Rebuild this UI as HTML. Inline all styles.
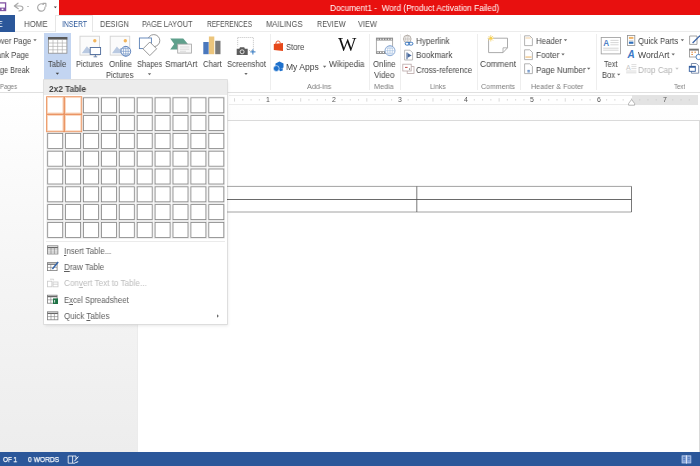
<!DOCTYPE html>
<html><head><meta charset="utf-8"><title>Document1 - Word</title>
<style>
html,body{margin:0;padding:0}
body{width:700px;height:466px;overflow:hidden;position:relative;background:#fff;font-family:"Liberation Sans",sans-serif}
.a{position:absolute}
.t{position:absolute;white-space:pre;will-change:transform;transform-origin:0 50%;font-family:"Liberation Sans",sans-serif}
.t u{text-decoration-thickness:0.5px;text-underline-offset:0.6px}
#title{left:59.2px;top:0;width:641px;height:14.8px;background:#e8100f}
#file{left:0;top:15px;width:15px;height:16.7px;background:#2b579a}
#tabline{left:15px;top:31px;width:685px;height:1px;background:#ececec}
#instab{left:54.8px;top:15px;width:36px;height:17px;background:#fff;border:1px solid #e6e6e6;border-bottom:none;box-sizing:content-box}
#ribbon{left:0;top:32px;width:700px;height:60px;background:#fff}
#ribline{left:0;top:92px;width:700px;height:1px;background:#e0e0e0}
#work{left:0;top:93px;width:700px;height:358.6px;background:linear-gradient(#ffffff,#f5f5f5 50%,#ededed)}
#page{left:137px;top:120.3px;width:560.5px;height:340px;background:#fff;border:1px solid #dadada;border-left-color:#ececec;border-bottom:none}
#rulerw{left:229px;top:94.6px;width:403px;height:10.2px;background:#fff;border-top:1px solid #ececec;border-bottom:1px solid #ececec;box-sizing:border-box}
#rulerg{left:631.6px;top:94.6px;width:66.6px;height:10.2px;background:#e3e3e3}
#status{left:0;top:451.6px;width:700px;height:14.4px;background:#2b579a}
#tblbtn{left:44.2px;top:32.8px;width:26.5px;height:46.6px;background:#c3d5f1}
#dd{left:44.2px;top:79.7px;width:182.6px;height:244.3px;background:#fff;box-shadow:0 0 0 0.8px #d9d9d9,1px 2px 3px rgba(0,0,0,.09)}
#ddh{left:44.2px;top:79.7px;width:182.6px;height:15.7px;background:#ececec}
#ddsep{left:46px;top:241px;width:179px;height:1px;background:#ebebeb}
.sep{position:absolute;top:34px;width:1px;height:55.5px;background:#eeeeee}
svg{position:absolute;left:0;top:0}
</style></head>
<body>
<div class="a" id="title"></div>
<div class="a" id="tabline"></div>
<div class="a" id="file"></div>
<div class="a" id="instab"></div>
<div class="a" id="ribbon"></div>
<div class="a" id="ribline"></div>
<div class="a" id="work"></div>
<div class="a" id="page"></div>
<div class="a" id="rulerw"></div>
<div class="a" id="rulerg"></div>
<div class="a" id="status"></div>
<div class="a" id="tblbtn"></div>
<div class="sep" style="left:269.5px"></div>
<div class="sep" style="left:368.5px"></div>
<div class="sep" style="left:399.5px"></div>
<div class="sep" style="left:476.5px"></div>
<div class="sep" style="left:519.5px"></div>
<div class="sep" style="left:595.8px"></div>
<div class="a" id="dd"></div>
<div class="a" id="ddh"></div>
<div class="a" id="ddsep"></div>
<svg width="700" height="466" viewBox="0 0 700 466">
<!-- ruler ticks -->
<g stroke="#c8c8c8" stroke-width="0.7"><line x1="234.52" y1="98.2" x2="234.52" y2="101.6" /><line x1="242.79" y1="99" x2="242.79" y2="100.6" /><line x1="251.06" y1="99" x2="251.06" y2="100.6" /><line x1="259.33" y1="99" x2="259.33" y2="100.6" /><line x1="275.87" y1="99" x2="275.87" y2="100.6" /><line x1="284.14" y1="99" x2="284.14" y2="100.6" /><line x1="292.41" y1="99" x2="292.41" y2="100.6" /><line x1="300.68" y1="98.2" x2="300.68" y2="101.6" /><line x1="308.94" y1="99" x2="308.94" y2="100.6" /><line x1="317.21" y1="99" x2="317.21" y2="100.6" /><line x1="325.48" y1="99" x2="325.48" y2="100.6" /><line x1="342.02" y1="99" x2="342.02" y2="100.6" /><line x1="350.29" y1="99" x2="350.29" y2="100.6" /><line x1="358.56" y1="99" x2="358.56" y2="100.6" /><line x1="366.82" y1="98.2" x2="366.82" y2="101.6" /><line x1="375.09" y1="99" x2="375.09" y2="100.6" /><line x1="383.36" y1="99" x2="383.36" y2="100.6" /><line x1="391.63" y1="99" x2="391.63" y2="100.6" /><line x1="408.17" y1="99" x2="408.17" y2="100.6" /><line x1="416.44" y1="99" x2="416.44" y2="100.6" /><line x1="424.71" y1="99" x2="424.71" y2="100.6" /><line x1="432.98" y1="98.2" x2="432.98" y2="101.6" /><line x1="441.24" y1="99" x2="441.24" y2="100.6" /><line x1="449.51" y1="99" x2="449.51" y2="100.6" /><line x1="457.78" y1="99" x2="457.78" y2="100.6" /><line x1="474.32" y1="99" x2="474.32" y2="100.6" /><line x1="482.59" y1="99" x2="482.59" y2="100.6" /><line x1="490.86" y1="99" x2="490.86" y2="100.6" /><line x1="499.12" y1="98.2" x2="499.12" y2="101.6" /><line x1="507.39" y1="99" x2="507.39" y2="100.6" /><line x1="515.66" y1="99" x2="515.66" y2="100.6" /><line x1="523.93" y1="99" x2="523.93" y2="100.6" /><line x1="540.47" y1="99" x2="540.47" y2="100.6" /><line x1="548.74" y1="99" x2="548.74" y2="100.6" /><line x1="557.01" y1="99" x2="557.01" y2="100.6" /><line x1="565.28" y1="98.2" x2="565.28" y2="101.6" /><line x1="573.54" y1="99" x2="573.54" y2="100.6" /><line x1="581.81" y1="99" x2="581.81" y2="100.6" /><line x1="590.08" y1="99" x2="590.08" y2="100.6" /><line x1="606.62" y1="99" x2="606.62" y2="100.6" /><line x1="614.89" y1="99" x2="614.89" y2="100.6" /><line x1="623.16" y1="99" x2="623.16" y2="100.6" /><line x1="631.42" y1="98.2" x2="631.42" y2="101.6" /><line x1="639.69" y1="99" x2="639.69" y2="100.6" /><line x1="647.96" y1="99" x2="647.96" y2="100.6" /><line x1="656.23" y1="99" x2="656.23" y2="100.6" /><line x1="672.77" y1="99" x2="672.77" y2="100.6" /><line x1="681.04" y1="99" x2="681.04" y2="100.6" /><line x1="689.31" y1="99" x2="689.31" y2="100.6" /></g>
<!-- right indent marker -->
<path d="M631.6 99.5 L634.6 103.5 L634.6 105.2 L628.6 105.2 L628.6 103.5 Z" fill="#fff" stroke="#999" stroke-width="0.7"/>
<!-- document table -->
<g stroke="#555" stroke-width="0.8" fill="none">
<path d="M227 186.4H631.5M227 212H631.5" stroke="#8a8a8a"/>
<path d="M227 199.5H631.5" stroke="#444"/>
<path d="M416.8 186.4V212M631.5 186.4V212" stroke="#555"/>
</g>
<!-- grid -->
<g fill="#fff" stroke="#838383" stroke-width="0.8"><g stroke="#e2e2e2" stroke-width="0.7"><rect x="82.70" y="97.00" width="16.60" height="16.60"/><rect x="100.60" y="97.00" width="16.60" height="16.60"/><rect x="118.50" y="97.00" width="16.60" height="16.60"/><rect x="136.40" y="97.00" width="16.60" height="16.60"/><rect x="154.30" y="97.00" width="16.60" height="16.60"/><rect x="172.20" y="97.00" width="16.60" height="16.60"/><rect x="190.10" y="97.00" width="16.60" height="16.60"/><rect x="208.00" y="97.00" width="16.60" height="16.60"/><rect x="82.70" y="114.80" width="16.60" height="16.60"/><rect x="100.60" y="114.80" width="16.60" height="16.60"/><rect x="118.50" y="114.80" width="16.60" height="16.60"/><rect x="136.40" y="114.80" width="16.60" height="16.60"/><rect x="154.30" y="114.80" width="16.60" height="16.60"/><rect x="172.20" y="114.80" width="16.60" height="16.60"/><rect x="190.10" y="114.80" width="16.60" height="16.60"/><rect x="208.00" y="114.80" width="16.60" height="16.60"/><rect x="46.90" y="132.60" width="16.60" height="16.60"/><rect x="64.80" y="132.60" width="16.60" height="16.60"/><rect x="82.70" y="132.60" width="16.60" height="16.60"/><rect x="100.60" y="132.60" width="16.60" height="16.60"/><rect x="118.50" y="132.60" width="16.60" height="16.60"/><rect x="136.40" y="132.60" width="16.60" height="16.60"/><rect x="154.30" y="132.60" width="16.60" height="16.60"/><rect x="172.20" y="132.60" width="16.60" height="16.60"/><rect x="190.10" y="132.60" width="16.60" height="16.60"/><rect x="208.00" y="132.60" width="16.60" height="16.60"/><rect x="46.90" y="150.40" width="16.60" height="16.60"/><rect x="64.80" y="150.40" width="16.60" height="16.60"/><rect x="82.70" y="150.40" width="16.60" height="16.60"/><rect x="100.60" y="150.40" width="16.60" height="16.60"/><rect x="118.50" y="150.40" width="16.60" height="16.60"/><rect x="136.40" y="150.40" width="16.60" height="16.60"/><rect x="154.30" y="150.40" width="16.60" height="16.60"/><rect x="172.20" y="150.40" width="16.60" height="16.60"/><rect x="190.10" y="150.40" width="16.60" height="16.60"/><rect x="208.00" y="150.40" width="16.60" height="16.60"/><rect x="46.90" y="168.20" width="16.60" height="16.60"/><rect x="64.80" y="168.20" width="16.60" height="16.60"/><rect x="82.70" y="168.20" width="16.60" height="16.60"/><rect x="100.60" y="168.20" width="16.60" height="16.60"/><rect x="118.50" y="168.20" width="16.60" height="16.60"/><rect x="136.40" y="168.20" width="16.60" height="16.60"/><rect x="154.30" y="168.20" width="16.60" height="16.60"/><rect x="172.20" y="168.20" width="16.60" height="16.60"/><rect x="190.10" y="168.20" width="16.60" height="16.60"/><rect x="208.00" y="168.20" width="16.60" height="16.60"/><rect x="46.90" y="186.00" width="16.60" height="16.60"/><rect x="64.80" y="186.00" width="16.60" height="16.60"/><rect x="82.70" y="186.00" width="16.60" height="16.60"/><rect x="100.60" y="186.00" width="16.60" height="16.60"/><rect x="118.50" y="186.00" width="16.60" height="16.60"/><rect x="136.40" y="186.00" width="16.60" height="16.60"/><rect x="154.30" y="186.00" width="16.60" height="16.60"/><rect x="172.20" y="186.00" width="16.60" height="16.60"/><rect x="190.10" y="186.00" width="16.60" height="16.60"/><rect x="208.00" y="186.00" width="16.60" height="16.60"/><rect x="46.90" y="203.80" width="16.60" height="16.60"/><rect x="64.80" y="203.80" width="16.60" height="16.60"/><rect x="82.70" y="203.80" width="16.60" height="16.60"/><rect x="100.60" y="203.80" width="16.60" height="16.60"/><rect x="118.50" y="203.80" width="16.60" height="16.60"/><rect x="136.40" y="203.80" width="16.60" height="16.60"/><rect x="154.30" y="203.80" width="16.60" height="16.60"/><rect x="172.20" y="203.80" width="16.60" height="16.60"/><rect x="190.10" y="203.80" width="16.60" height="16.60"/><rect x="208.00" y="203.80" width="16.60" height="16.60"/><rect x="46.90" y="221.60" width="16.60" height="16.60"/><rect x="64.80" y="221.60" width="16.60" height="16.60"/><rect x="82.70" y="221.60" width="16.60" height="16.60"/><rect x="100.60" y="221.60" width="16.60" height="16.60"/><rect x="118.50" y="221.60" width="16.60" height="16.60"/><rect x="136.40" y="221.60" width="16.60" height="16.60"/><rect x="154.30" y="221.60" width="16.60" height="16.60"/><rect x="172.20" y="221.60" width="16.60" height="16.60"/><rect x="190.10" y="221.60" width="16.60" height="16.60"/><rect x="208.00" y="221.60" width="16.60" height="16.60"/></g><rect x="83.50" y="97.80" width="15.00" height="15.00"/><rect x="101.40" y="97.80" width="15.00" height="15.00"/><rect x="119.30" y="97.80" width="15.00" height="15.00"/><rect x="137.20" y="97.80" width="15.00" height="15.00"/><rect x="155.10" y="97.80" width="15.00" height="15.00"/><rect x="173.00" y="97.80" width="15.00" height="15.00"/><rect x="190.90" y="97.80" width="15.00" height="15.00"/><rect x="208.80" y="97.80" width="15.00" height="15.00"/><rect x="83.50" y="115.60" width="15.00" height="15.00"/><rect x="101.40" y="115.60" width="15.00" height="15.00"/><rect x="119.30" y="115.60" width="15.00" height="15.00"/><rect x="137.20" y="115.60" width="15.00" height="15.00"/><rect x="155.10" y="115.60" width="15.00" height="15.00"/><rect x="173.00" y="115.60" width="15.00" height="15.00"/><rect x="190.90" y="115.60" width="15.00" height="15.00"/><rect x="208.80" y="115.60" width="15.00" height="15.00"/><rect x="47.70" y="133.40" width="15.00" height="15.00"/><rect x="65.60" y="133.40" width="15.00" height="15.00"/><rect x="83.50" y="133.40" width="15.00" height="15.00"/><rect x="101.40" y="133.40" width="15.00" height="15.00"/><rect x="119.30" y="133.40" width="15.00" height="15.00"/><rect x="137.20" y="133.40" width="15.00" height="15.00"/><rect x="155.10" y="133.40" width="15.00" height="15.00"/><rect x="173.00" y="133.40" width="15.00" height="15.00"/><rect x="190.90" y="133.40" width="15.00" height="15.00"/><rect x="208.80" y="133.40" width="15.00" height="15.00"/><rect x="47.70" y="151.20" width="15.00" height="15.00"/><rect x="65.60" y="151.20" width="15.00" height="15.00"/><rect x="83.50" y="151.20" width="15.00" height="15.00"/><rect x="101.40" y="151.20" width="15.00" height="15.00"/><rect x="119.30" y="151.20" width="15.00" height="15.00"/><rect x="137.20" y="151.20" width="15.00" height="15.00"/><rect x="155.10" y="151.20" width="15.00" height="15.00"/><rect x="173.00" y="151.20" width="15.00" height="15.00"/><rect x="190.90" y="151.20" width="15.00" height="15.00"/><rect x="208.80" y="151.20" width="15.00" height="15.00"/><rect x="47.70" y="169.00" width="15.00" height="15.00"/><rect x="65.60" y="169.00" width="15.00" height="15.00"/><rect x="83.50" y="169.00" width="15.00" height="15.00"/><rect x="101.40" y="169.00" width="15.00" height="15.00"/><rect x="119.30" y="169.00" width="15.00" height="15.00"/><rect x="137.20" y="169.00" width="15.00" height="15.00"/><rect x="155.10" y="169.00" width="15.00" height="15.00"/><rect x="173.00" y="169.00" width="15.00" height="15.00"/><rect x="190.90" y="169.00" width="15.00" height="15.00"/><rect x="208.80" y="169.00" width="15.00" height="15.00"/><rect x="47.70" y="186.80" width="15.00" height="15.00"/><rect x="65.60" y="186.80" width="15.00" height="15.00"/><rect x="83.50" y="186.80" width="15.00" height="15.00"/><rect x="101.40" y="186.80" width="15.00" height="15.00"/><rect x="119.30" y="186.80" width="15.00" height="15.00"/><rect x="137.20" y="186.80" width="15.00" height="15.00"/><rect x="155.10" y="186.80" width="15.00" height="15.00"/><rect x="173.00" y="186.80" width="15.00" height="15.00"/><rect x="190.90" y="186.80" width="15.00" height="15.00"/><rect x="208.80" y="186.80" width="15.00" height="15.00"/><rect x="47.70" y="204.60" width="15.00" height="15.00"/><rect x="65.60" y="204.60" width="15.00" height="15.00"/><rect x="83.50" y="204.60" width="15.00" height="15.00"/><rect x="101.40" y="204.60" width="15.00" height="15.00"/><rect x="119.30" y="204.60" width="15.00" height="15.00"/><rect x="137.20" y="204.60" width="15.00" height="15.00"/><rect x="155.10" y="204.60" width="15.00" height="15.00"/><rect x="173.00" y="204.60" width="15.00" height="15.00"/><rect x="190.90" y="204.60" width="15.00" height="15.00"/><rect x="208.80" y="204.60" width="15.00" height="15.00"/><rect x="47.70" y="222.40" width="15.00" height="15.00"/><rect x="65.60" y="222.40" width="15.00" height="15.00"/><rect x="83.50" y="222.40" width="15.00" height="15.00"/><rect x="101.40" y="222.40" width="15.00" height="15.00"/><rect x="119.30" y="222.40" width="15.00" height="15.00"/><rect x="137.20" y="222.40" width="15.00" height="15.00"/><rect x="155.10" y="222.40" width="15.00" height="15.00"/><rect x="173.00" y="222.40" width="15.00" height="15.00"/><rect x="190.90" y="222.40" width="15.00" height="15.00"/><rect x="208.80" y="222.40" width="15.00" height="15.00"/></g>
<g fill="#fff" stroke="#ea8f5a" stroke-width="1"><rect x="46.65" y="96.75" width="17.10" height="17.10"/><rect x="64.55" y="96.75" width="17.10" height="17.10"/><rect x="46.65" y="114.55" width="17.10" height="17.10"/><rect x="64.55" y="114.55" width="17.10" height="17.10"/><g stroke="#f9d3b9" stroke-width="0.9"><rect x="47.50" y="97.60" width="15.40" height="15.40"/><rect x="65.40" y="97.60" width="15.40" height="15.40"/><rect x="47.50" y="115.40" width="15.40" height="15.40"/><rect x="65.40" y="115.40" width="15.40" height="15.40"/></g></g>
<!-- QAT -->
<g>
<rect x="-4" y="2.9" width="9.6" height="7.6" fill="#fff" stroke="#8153a3" stroke-width="1.3"/>
<rect x="-4" y="7.6" width="9.6" height="2.9" fill="#8153a3"/>
<rect x="1.6" y="8.6" width="1.8" height="1.5" fill="#fff"/>
<g fill="none" stroke="#a9a9a9" stroke-width="1.15" stroke-linecap="round" stroke-linejoin="round">
<path d="M18 3.2L14.3 6L18.3 8.7M14.8 6H20Q23.2 6.3 22.9 8.6Q22.4 10.9 19 10.9"/>
<path d="M43.4 4.4A3.7 3.7 0 1 0 45 7.1"/>
<path d="M42.9 3.4H45.9V6.3"/>
</g>
<path d="M27 6.5H29" stroke="#c4c4c4" stroke-width="1"/>
<path d="M53.8 6.6H56.9L55.35 8.3Z" fill="#444"/>
</g>
<!-- small dropdown arrows -->
<g fill="#6a6a6a">
<path d="M33.30 39.35h3.4l-1.7 1.95z"/>
<path d="M55.70 72.75h3.4l-1.7 1.95z" fill="#444"/>
<path d="M147.80 73.25h3.4l-1.7 1.95z"/>
<path d="M244.30 73.05h3.4l-1.7 1.95z"/>
<path d="M322.90 65.75h3.4l-1.7 1.95z"/>
<path d="M563.80 39.25h3.4l-1.7 1.95z"/>
<path d="M561.30 53.55h3.4l-1.7 1.95z"/>
<path d="M587.00 67.75h3.4l-1.7 1.95z"/>
<path d="M617.00 73.65h3.4l-1.7 1.95z"/>
<path d="M680.70 39.35h3.4l-1.7 1.95z"/>
<path d="M671.50 53.55h3.4l-1.7 1.95z"/>
<path d="M675.30 67.75h3.4l-1.7 1.95z" fill="#c4c4c4"/>
<path d="M217 314.3v3.4l1.9-1.7z"/>
</g>
<!-- Table icon -->
<g>
<rect x="48.4" y="37.4" width="18.5" height="15.8" fill="#fff" stroke="#8a8a8a" stroke-width="0.8"/>
<rect x="48" y="37" width="19.3" height="2.6" fill="#595959"/>
<path d="M53 39.6V53.2M57.65 39.6V53.2M62.3 39.6V53.2M48.4 43H66.9M48.4 46.4H66.9M48.4 49.8H66.9" stroke="#a6a6a6" stroke-width="0.6" fill="none"/>
</g>
<!-- Pictures -->
<g>
<rect x="80" y="36.2" width="19.5" height="18.9" fill="#fbfbfb" stroke="#d2d2d2" stroke-width="0.9"/>
<circle cx="94.8" cy="40.7" r="1.7" fill="#f2b45a"/>
<path d="M81.8 53.3L86.9 46.2L89.5 49.2L91.5 47.5L96 53.3Z" fill="#b9c9e1"/>
<rect x="90.2" y="47.5" width="10.4" height="7" fill="#fff" stroke="#4a6899" stroke-width="0.9"/>
<path d="M95.4 54.5V56.6M93.6 56.8H97.2" stroke="#4a6899" stroke-width="0.8"/>
</g>
<!-- Online Pictures -->
<g>
<rect x="110.2" y="36.2" width="19.5" height="18.9" fill="#fbfbfb" stroke="#d2d2d2" stroke-width="0.9"/>
<circle cx="125.3" cy="40.7" r="1.7" fill="#f2b45a"/>
<path d="M112 53.3L116.9 46.4L119.3 49.2L121 47.8L125 53.3Z" fill="#b9c9e1"/>
<circle cx="125.8" cy="51.3" r="4.9" fill="#fff" stroke="#4a74b4" stroke-width="0.85"/>
<path d="M121 51.3H130.6M122 48.7H129.6M122 53.9H129.6M125.8 46.4V56.2" stroke="#5a82bd" stroke-width="0.55" fill="none"/>
<ellipse cx="125.8" cy="51.3" rx="2.4" ry="4.9" fill="none" stroke="#5a82bd" stroke-width="0.55"/>
</g>
<!-- Shapes -->
<g fill="#fff" stroke-width="0.9">
<circle cx="153.8" cy="40.6" r="6" stroke="#8c8c8c"/>
<rect x="139.4" y="38" width="12" height="10.6" stroke="#5b80b6"/>
<path d="M149.8 42L156.6 48.8L149.8 55.6L143 48.8Z" stroke="#8c8c8c"/>
</g>
<!-- SmartArt -->
<g>
<path d="M170.2 38.4H183.2L187.9 44L183.2 49.6H170.2L174.2 44Z" fill="#5fa08c"/>
<rect x="177.7" y="44.1" width="13.8" height="9" fill="#f6f6f6" stroke="#a3a3a3" stroke-width="0.8"/>
<path d="M180 47H189.3M180 49.2H189.3M180 51.3H186" stroke="#d0d0d0" stroke-width="0.7"/>
</g>
<!-- Chart -->
<g>
<rect x="203.3" y="42" width="5.4" height="12.2" fill="#4a78bd"/>
<rect x="208.9" y="36.5" width="5.4" height="17.7" fill="#ecc57c"/>
<rect x="215.2" y="40.8" width="5.3" height="13.4" fill="#7a7a7a"/>
</g>
<!-- Screenshot -->
<g>
<rect x="237.7" y="37.5" width="15.7" height="13" fill="none" stroke="#a8a8a8" stroke-width="0.7" stroke-dasharray="1 1"/>
<rect x="235.8" y="46.5" width="13" height="9" fill="#fff"/>
<path d="M236.7 48.7H239.3L240 47.3H244.2L244.9 48.7H247.7V55H236.7Z" fill="#5c5c5c"/>
<circle cx="242.1" cy="51.8" r="2" fill="#5c5c5c" stroke="#fff" stroke-width="0.8"/>
<path d="M250.3 51.9H255.5M252.9 49.3V54.5" stroke="#2f77c0" stroke-width="1"/>
</g>
<!-- Store -->
<g>
<path d="M273.8 44.1L283 43V50.9L273.8 49.9Z" fill="#e6481a"/>
<path d="M275.8 44Q275.8 40.9 278 40.9Q280.2 40.9 280.4 43.4" fill="none" stroke="#e6481a" stroke-width="0.9"/>
</g>
<!-- My Apps -->
<g fill="#1d70cc">
<path d="M279.5 61.6L283.5 63.5V67.6L279.5 69.5L275.5 67.6V63.5Z"/>
<circle cx="276.3" cy="68.5" r="2.9" stroke="#fff" stroke-width="0.6"/>
<path d="M279 69.6L282.6 68L282.8 70.6L280 71.2Z"/>
</g>
<!-- Online video -->
<g>
<rect x="376.3" y="38" width="16.4" height="15.6" fill="#fff" stroke="#8a8a8a" stroke-width="0.7"/>
<rect x="376.3" y="38" width="16.4" height="2.5" fill="#868686"/>
<rect x="376.3" y="51.2" width="16.4" height="2.4" fill="#868686"/>
<path d="M377.4 39.25H392M377.4 52.4H392" stroke="#fff" stroke-width="1.1" stroke-dasharray="1.3 1.35"/>
<circle cx="390" cy="50.7" r="5" fill="#fff" stroke="#7096cc" stroke-width="0.8"/>
<path d="M385.2 50.7H394.8M386.3 48.2H393.7M386.3 53.2H393.7M390 45.8V55.6" stroke="#8fb0db" stroke-width="0.5" fill="none"/>
<ellipse cx="390" cy="50.7" rx="2.4" ry="5" fill="none" stroke="#8fb0db" stroke-width="0.5"/>
</g>
<!-- Hyperlink -->
<g fill="none">
<circle cx="407.3" cy="39" r="3.8" stroke="#a39a94" stroke-width="0.8" fill="#fff"/>
<path d="M403.6 39H411M407.3 35.3V42.7" stroke="#b0a8a2" stroke-width="0.55"/>
<ellipse cx="407.3" cy="39" rx="1.8" ry="3.8" stroke="#b0a8a2" stroke-width="0.55"/>
<rect x="405.2" y="42.3" width="4.1" height="2.8" rx="1.4" stroke="#2c6db9" stroke-width="0.95" fill="#fff"/>
<rect x="408.8" y="42.3" width="4.1" height="2.8" rx="1.4" stroke="#2c6db9" stroke-width="0.95"/>
</g>
<!-- Bookmark -->
<g>
<path d="M404.6 50.2H410L412.6 52.8V60H404.6Z" fill="#fff" stroke="#a8a8a8" stroke-width="0.8"/>
<path d="M407 52.4V59.2" stroke="#46679b" stroke-width="1.1"/>
<path d="M407.6 53L411.6 55.4L407.6 57.8Z" fill="#46679b"/>
</g>
<!-- Cross-reference -->
<g fill="#fff" stroke="#b9a7a7" stroke-width="0.8">
<rect x="407.2" y="66.6" width="6.8" height="6.8"/>
<rect x="402.8" y="64.2" width="8.4" height="6.8"/>
<path d="M405 67.4H407.6" stroke="#c0504d" stroke-width="1"/>
<path d="M409.6 68.2V70" stroke="#777" stroke-width="0.8"/>
</g>
<!-- Comment -->
<g>
<path d="M488.6 38.2H507.5V47.8L503 52.6H488.6Z" fill="#fff" stroke="#a2a2a2" stroke-width="0.9"/>
<path d="M507.5 47.8H503V52.6" fill="none" stroke="#a2a2a2" stroke-width="0.8"/>
<circle cx="490.8" cy="38.3" r="2.4" fill="#fff"/>
<path d="M492.00 38.30L494.00 38.30M491.65 39.15L493.06 40.56M490.80 39.50L490.80 41.50M489.95 39.15L488.54 40.56M489.60 38.30L487.60 38.30M489.95 37.45L488.54 36.04M490.80 37.10L490.80 35.10M491.65 37.45L493.06 36.04" stroke="#f2cf68" stroke-width="0.8"/>
<circle cx="490.8" cy="38.3" r="1.5" fill="#f6d04e"/>
</g>
<!-- Header / Footer / Page number -->
<g fill="#fff" stroke="#a0a0a0" stroke-width="0.8">
<path d="M524.6 35.8H529.8L532.4 38.4V45.6H524.6Z"/>
<path d="M524.6 49.8H529.8L532.4 52.4V59.6H524.6Z"/>
<path d="M524.6 63.8H529.8L532.4 66.4V73.6H524.6Z"/>
</g>
<rect x="525.4" y="37.2" width="5.4" height="1.6" fill="#f7e2c4"/>
<rect x="525.4" y="56.2" width="6.2" height="1.8" fill="#f4d4a6"/>
<path d="M527.4 70.5H529.8M527.4 71.8H529.8M528.1 69.8V72.6M529.2 69.8V72.6" stroke="#3b6fb5" stroke-width="0.5"/>
<!-- Text Box -->
<g>
<rect x="601.2" y="37.5" width="19.3" height="16.4" fill="#fff" stroke="#9a9a9a" stroke-width="0.8"/>
<path d="M610.4 40.4H618.6M610.4 42.6H618.6M610.4 44.8H618.6M603.2 48.2H618.6M603.2 50.2H618.6" stroke="#c4c4c4" stroke-width="0.7"/>
<text x="603.3" y="45.7" font-family="Liberation Sans, sans-serif" font-size="8.2" font-weight="700" fill="#4f82c6">A</text>
</g>
<!-- Quick parts -->
<g>
<rect x="627.5" y="35.5" width="7.3" height="9.9" fill="#fff" stroke="#8e8e8e" stroke-width="0.8"/>
<rect x="628.9" y="36.9" width="4.5" height="2" fill="#f0b468"/>
<path d="M628.9 40.4H633.4" stroke="#bbb" stroke-width="0.6"/>
<rect x="628.9" y="41.6" width="4.5" height="2.2" fill="#2f6fba"/>
</g>
<!-- WordArt -->
<text x="627.4" y="58.3" font-family="Liberation Sans, sans-serif" font-size="10" font-style="italic" font-weight="700" fill="#3b78c6">A</text>
<!-- Drop cap -->
<g>
<text x="626" y="69.8" font-family="Liberation Sans, sans-serif" font-size="7" fill="#c6c6c6">A</text>
<path d="M631.4 64.6H636.4M631.4 66.6H636.4M631.4 68.6H636.4M626.2 71H636.4M626.2 72.8H636.4" stroke="#d3d3d3" stroke-width="0.8"/>
</g>
<!-- right partial icons -->
<g>
<path d="M689.6 36H697V44.4H689.6Z" fill="#fff" stroke="#8e8e8e" stroke-width="0.8"/>
<path d="M692.6 43L700 35.6" stroke="#3a63a6" stroke-width="1.3"/>
<rect x="689.5" y="49" width="9" height="8" fill="#fff" stroke="#8e8e8e" stroke-width="0.8"/>
<rect x="689.5" y="49" width="9" height="1.6" fill="#777"/>
<path d="M691.3 52.2H693M691.3 54.4H693M694.4 52.2H696" stroke="#e08a3c" stroke-width="1"/>
<circle cx="698.6" cy="57" r="2.6" fill="#fff" stroke="#2f6fba" stroke-width="0.8"/>
<path d="M691.4 63.5H696.3L698.7 65.9V73.2H691.4Z" fill="#fff" stroke="#5f7397" stroke-width="0.8"/>
<rect x="689.3" y="66.3" width="6" height="5" fill="#fff" stroke="#2f5a9c" stroke-width="0.9"/>
<path d="M689.3 66.9H695.3" stroke="#2f5a9c" stroke-width="1.7"/>
</g>
<!-- dropdown menu icons -->
<g fill="#fff" stroke="#7d7d7d" stroke-width="0.8">
<rect x="47.5" y="245.8" width="10.4" height="8.2"/>
<path d="M47.5 247.6H57.9" stroke="#666" stroke-width="1.4"/>
<path d="M51 247.6V254M54.4 247.6V254M47.5 249.9H57.9M47.5 252H57.9" stroke-width="0.6"/>
<rect x="47.5" y="262.6" width="9.6" height="8"/>
<path d="M47.5 264.2H57" stroke="#666" stroke-width="1.2"/>
<path d="M50.8 264.2V270.6M47.5 267.4H57" stroke-width="0.6"/>
<path d="M52.4 269L58.2 262" stroke="#3465a8" stroke-width="1.5"/>
<g stroke="#c9c9c9">
<rect x="47.5" y="281.2" width="4.4" height="5.6"/>
<rect x="53" y="282" width="5" height="4.8"/>
<path d="M53 284.2H58M50 279.2H53.6V280.4" fill="none"/>
</g>
<rect x="47.5" y="295.2" width="9.6" height="8"/>
<path d="M47.5 296.6H57.1" stroke="#666" stroke-width="1.3"/>
<path d="M50.8 296.6V303.2M47.5 299.8H57" stroke-width="0.6"/>
<rect x="53" y="298.4" width="5" height="5.6" fill="#1f7346" stroke="none"/>
<path d="M54.6 300V302.6" stroke="#fff" stroke-width="0.8"/>
<rect x="47.5" y="311.8" width="10.4" height="8"/>
<path d="M47.5 313.4H57.9" stroke="#666" stroke-width="1.3"/>
<path d="M51 313.4V319.8M54.4 313.4V319.8M47.5 316.6H57.9" stroke-width="0.6"/>
</g>
<!-- status bar icon -->
<g fill="none" stroke="#fff" stroke-width="0.8">
<path d="M68.2 456H72.6V463.2H68.2ZM72.6 456H76V459M72.6 463.2H75"/>
<path d="M74.4 461.2L78.4 456.6M75.2 462.8L78.2 461.6" stroke-width="1"/>
</g>
<!-- read mode icon -->
<g>
<rect x="682" y="455.8" width="4.3" height="7.2" fill="#7f9fd6" stroke="#c3d3ef" stroke-width="0.7"/>
<rect x="686.6" y="455.8" width="4.3" height="7.2" fill="#7f9fd6" stroke="#c3d3ef" stroke-width="0.7"/>
<path d="M686.45 455.4V463.6" stroke="#e6eefb" stroke-width="0.8"/>
<path d="M683.2 457.6H685.2M683.2 459.4H685.2M687.8 457.6H689.8M687.8 459.4H689.8" stroke="#3a63a8" stroke-width="0.6"/>
</g>

</svg>
<div id="txt" style="position:absolute;left:0;top:0;width:700px;height:466px;">
<span class="t" style="left:330.00px;top:2.88px;font-size:8.56px;line-height:10px;color:#fff;transform:scaleX(0.9609)">Document1 -  Word (Product Activation Failed)</span>
<span class="t" style="left:-14.50px;top:18.88px;font-size:8.56px;line-height:10px;color:#fff;transform:scaleX(0.9246)">FILE</span>
<span class="t" style="left:24.00px;top:18.88px;font-size:8.56px;line-height:10px;color:#505050;transform:scaleX(0.9160)">HOME</span>
<span class="t" style="left:61.50px;top:18.88px;font-size:8.56px;line-height:10px;color:#2b579a;transform:scaleX(0.8016)">INSERT</span>
<span class="t" style="left:100.00px;top:18.88px;font-size:8.56px;line-height:10px;color:#505050;transform:scaleX(0.8847)">DESIGN</span>
<span class="t" style="left:142.00px;top:18.88px;font-size:8.56px;line-height:10px;color:#505050;transform:scaleX(0.8550)">PAGE LAYOUT</span>
<span class="t" style="left:206.50px;top:18.88px;font-size:8.56px;line-height:10px;color:#505050;transform:scaleX(0.7703)">REFERENCES</span>
<span class="t" style="left:266.00px;top:18.88px;font-size:8.56px;line-height:10px;color:#505050;transform:scaleX(0.8933)">MAILINGS</span>
<span class="t" style="left:316.50px;top:18.88px;font-size:8.56px;line-height:10px;color:#505050;transform:scaleX(0.8452)">REVIEW</span>
<span class="t" style="left:358.00px;top:18.88px;font-size:8.56px;line-height:10px;color:#505050;transform:scaleX(0.8698)">VIEW</span>
<span class="t" style="left:-8.90px;top:36.08px;font-size:8.56px;line-height:10px;color:#444;transform:scaleX(0.8883)">Cover Page</span>
<span class="t" style="left:-10.00px;top:50.48px;font-size:8.56px;line-height:10px;color:#444;transform:scaleX(0.8921)">Blank Page</span>
<span class="t" style="left:-9.00px;top:64.58px;font-size:8.56px;line-height:10px;color:#444;transform:scaleX(0.8574)">Page Break</span>
<span class="t" style="left:-0.30px;top:82.42px;font-size:7.38px;line-height:10px;color:#7c7c7c;transform:scaleX(0.8173)">Pages</span>
<span class="t" style="left:48.30px;top:58.68px;font-size:8.56px;line-height:10px;color:#444;transform:scaleX(0.8905)">Table</span>
<span class="t" style="left:75.80px;top:58.68px;font-size:8.56px;line-height:10px;color:#444;transform:scaleX(0.8810)">Pictures</span>
<span class="t" style="left:108.80px;top:58.68px;font-size:8.56px;line-height:10px;color:#444;transform:scaleX(0.9305)">Online</span>
<span class="t" style="left:106.20px;top:70.08px;font-size:8.56px;line-height:10px;color:#444;transform:scaleX(0.8874)">Pictures</span>
<span class="t" style="left:136.80px;top:58.68px;font-size:8.56px;line-height:10px;color:#444;transform:scaleX(0.8690)">Shapes</span>
<span class="t" style="left:164.80px;top:58.68px;font-size:8.56px;line-height:10px;color:#444;transform:scaleX(0.9609)">SmartArt</span>
<span class="t" style="left:202.70px;top:58.68px;font-size:8.56px;line-height:10px;color:#444;transform:scaleX(0.8993)">Chart</span>
<span class="t" style="left:226.60px;top:58.68px;font-size:8.56px;line-height:10px;color:#444;transform:scaleX(0.9040)">Screenshot</span>
<span class="t" style="left:285.70px;top:42.48px;font-size:8.56px;line-height:10px;color:#444;transform:scaleX(0.8954)">Store</span>
<span class="t" style="left:285.70px;top:62.48px;font-size:8.56px;line-height:10px;color:#444;transform:scaleX(0.9853)">My Apps</span>
<span class="t" style="left:329.40px;top:58.68px;font-size:8.56px;line-height:10px;color:#444;transform:scaleX(0.9551)">Wikipedia</span>
<span class="t" style="left:338.40px;top:33.16px;font-size:18.50px;line-height:24px;color:#111;transform:scaleX(1.0533);font-family:'Liberation Serif', serif">W</span>
<span class="t" style="left:306.70px;top:82.42px;font-size:7.38px;line-height:10px;color:#7c7c7c;transform:scaleX(0.9714)">Add-ins</span>
<span class="t" style="left:372.50px;top:58.68px;font-size:8.56px;line-height:10px;color:#444;transform:scaleX(0.9102)">Online</span>
<span class="t" style="left:373.70px;top:70.08px;font-size:8.56px;line-height:10px;color:#444;transform:scaleX(0.9347)">Video</span>
<span class="t" style="left:374.00px;top:82.42px;font-size:7.38px;line-height:10px;color:#7c7c7c;transform:scaleX(0.9705)">Media</span>
<span class="t" style="left:415.60px;top:36.08px;font-size:8.56px;line-height:10px;color:#444;transform:scaleX(0.9460)">Hyperlink</span>
<span class="t" style="left:415.60px;top:50.48px;font-size:8.56px;line-height:10px;color:#444;transform:scaleX(0.9458)">Bookmark</span>
<span class="t" style="left:415.60px;top:64.58px;font-size:8.56px;line-height:10px;color:#444;transform:scaleX(0.9155)">Cross-reference</span>
<span class="t" style="left:430.30px;top:82.42px;font-size:7.38px;line-height:10px;color:#7c7c7c;transform:scaleX(0.9118)">Links</span>
<span class="t" style="left:480.00px;top:58.68px;font-size:8.56px;line-height:10px;color:#444;transform:scaleX(0.9717)">Comment</span>
<span class="t" style="left:481.00px;top:82.42px;font-size:7.38px;line-height:10px;color:#7c7c7c;transform:scaleX(0.9535)">Comments</span>
<span class="t" style="left:535.60px;top:36.08px;font-size:8.56px;line-height:10px;color:#444;transform:scaleX(0.9163)">Header</span>
<span class="t" style="left:535.60px;top:50.48px;font-size:8.56px;line-height:10px;color:#444;transform:scaleX(0.9472)">Footer</span>
<span class="t" style="left:535.60px;top:64.58px;font-size:8.56px;line-height:10px;color:#444;transform:scaleX(0.9368)">Page Number</span>
<span class="t" style="left:531.00px;top:82.42px;font-size:7.38px;line-height:10px;color:#7c7c7c;transform:scaleX(0.9628)">Header &amp; Footer</span>
<span class="t" style="left:604.40px;top:58.68px;font-size:8.56px;line-height:10px;color:#444;transform:scaleX(0.8669)">Text</span>
<span class="t" style="left:602.00px;top:70.08px;font-size:8.56px;line-height:10px;color:#444;transform:scaleX(0.8823)">Box</span>
<span class="t" style="left:638.10px;top:36.08px;font-size:8.56px;line-height:10px;color:#444;transform:scaleX(0.9078)">Quick Parts</span>
<span class="t" style="left:638.10px;top:50.48px;font-size:8.56px;line-height:10px;color:#444;transform:scaleX(1.0068)">WordArt</span>
<span class="t" style="left:638.10px;top:64.58px;font-size:8.56px;line-height:10px;color:#b4b4b4;transform:scaleX(0.9482)">Drop Cap</span>
<span class="t" style="left:674.40px;top:82.42px;font-size:7.38px;line-height:10px;color:#7c7c7c;transform:scaleX(0.8203)">Text</span>
<span class="t" style="left:48.80px;top:83.88px;font-size:8.45px;line-height:10px;color:#444;transform:scaleX(0.9777);font-weight:700">2x2 Table</span>
<span class="t" style="left:63.60px;top:245.68px;font-size:8.56px;line-height:10px;color:#5e5e5e;transform:scaleX(0.9246)"><u>I</u>nsert Table...</span>
<span class="t" style="left:63.60px;top:261.98px;font-size:8.56px;line-height:10px;color:#5e5e5e;transform:scaleX(0.9435)"><u>D</u>raw Table</span>
<span class="t" style="left:63.60px;top:278.48px;font-size:8.56px;line-height:10px;color:#bcbcbc;transform:scaleX(0.9494)">Con<u>v</u>ert Text to Table...</span>
<span class="t" style="left:63.60px;top:294.88px;font-size:8.56px;line-height:10px;color:#5e5e5e;transform:scaleX(0.9017)">E<u>x</u>cel Spreadsheet</span>
<span class="t" style="left:63.60px;top:311.28px;font-size:8.56px;line-height:10px;color:#5e5e5e;transform:scaleX(0.9307)">Quick <u>T</u>ables</span>
<span class="t" style="left:265.80px;top:95.19px;font-size:6.96px;line-height:10px;color:#555;transform:scaleX(0.9328)">1</span>
<span class="t" style="left:331.95px;top:95.19px;font-size:6.96px;line-height:10px;color:#555;transform:scaleX(0.9328)">2</span>
<span class="t" style="left:398.10px;top:95.19px;font-size:6.96px;line-height:10px;color:#555;transform:scaleX(0.9328)">3</span>
<span class="t" style="left:464.25px;top:95.19px;font-size:6.96px;line-height:10px;color:#555;transform:scaleX(0.9328)">4</span>
<span class="t" style="left:530.40px;top:95.19px;font-size:6.96px;line-height:10px;color:#555;transform:scaleX(0.9328)">5</span>
<span class="t" style="left:596.55px;top:95.19px;font-size:6.96px;line-height:10px;color:#555;transform:scaleX(0.9328)">6</span>
<span class="t" style="left:662.70px;top:95.19px;font-size:6.96px;line-height:10px;color:#555;transform:scaleX(0.9328)">7</span>
<span class="t" style="left:3.00px;top:455.05px;font-size:8.03px;line-height:10px;color:#fff;transform:scaleX(0.7909);-webkit-text-stroke:0.25px #fff">OF 1</span>
<span class="t" style="left:27.90px;top:455.05px;font-size:8.03px;line-height:10px;color:#fff;transform:scaleX(0.8311);-webkit-text-stroke:0.25px #fff">0 WORDS</span>
</div>
</body></html>
